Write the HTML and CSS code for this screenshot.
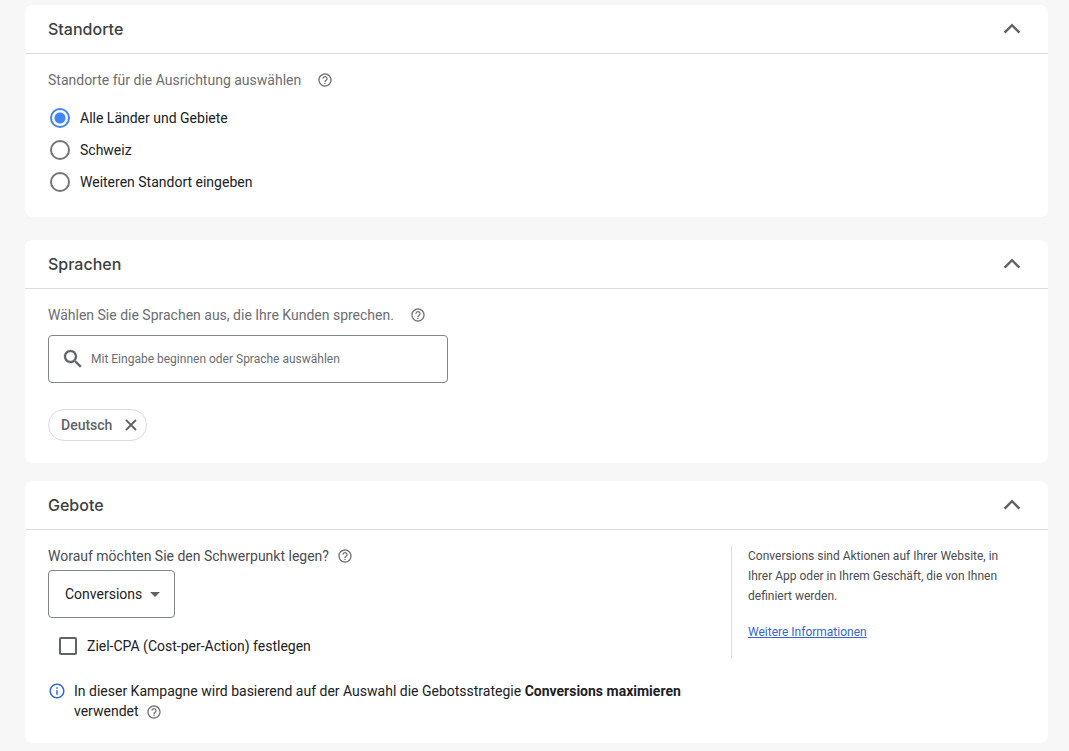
FILE: index.html
```html
<!DOCTYPE html>
<html lang="de">
<head>
  <meta charset="UTF-8">
  <meta name="viewport" content="width=device-width, initial-scale=1.0">
  <title>Kampagneneinstellungen</title>
  <link rel="stylesheet" href="styles.css">
</head>
<body>
  <!-- Shared icon shapes -->
  <svg class="sprite" aria-hidden="true">
    <symbol id="icon-help" viewBox="0 0 24 24">
      <path d="M11 18h2v-2h-2v2zm1-16C6.48 2 2 6.48 2 12s4.48 10 10 10 10-4.48 10-10S17.52 2 12 2zm0 18c-4.41 0-8-3.59-8-8s3.59-8 8-8 8 3.59 8 8-3.59 8-8 8zm0-14c-2.21 0-4 1.79-4 4h2c0-1.1.9-2 2-2s2 .9 2 2c0 2-3 1.75-3 5h2c0-2.25 3-2.5 3-5 0-2.21-1.79-4-4-4z"/>
    </symbol>
    <symbol id="icon-up" viewBox="0 0 24 24">
      <path d="M4.6 15.6L12 8.2l7.4 7.4" fill="none" stroke="currentColor" stroke-width="2.4"/>
    </symbol>
  </svg>

  <main class="settings">
    <section class="card">
      <div class="card-header">
        <h2>Standorte</h2>
        <button type="button" class="icon-button" aria-label="Standorte einklappen"><svg class="icon"><use href="#icon-up"/></svg></button>
      </div>
      <div class="card-body">
        <div class="field-title">
          <span id="locationTitle">Standorte für die Ausrichtung auswählen</span>
          <button type="button" class="icon-button help" aria-label="Hilfe"><svg class="icon-small"><use href="#icon-help"/></svg></button>
        </div>
        <div class="radio-group" role="radiogroup" aria-labelledby="locationTitle">
          <label class="radio"><input type="radio" name="location" value="all" checked>Alle Länder und Gebiete</label>
          <label class="radio"><input type="radio" name="location" value="ch">Schweiz</label>
          <label class="radio"><input type="radio" name="location" value="other">Weiteren Standort eingeben</label>
        </div>
      </div>
    </section>

    <section class="card card-languages">
      <div class="card-header">
        <h2>Sprachen</h2>
        <button type="button" class="icon-button" aria-label="Sprachen einklappen"><svg class="icon"><use href="#icon-up"/></svg></button>
      </div>
      <div class="card-body">
        <div class="field-title">
          <label for="language">Wählen Sie die Sprachen aus, die Ihre Kunden sprechen.</label>
          <button type="button" class="icon-button help" aria-label="Hilfe"><svg class="icon-small"><use href="#icon-help"/></svg></button>
        </div>
        <div class="search">
          <svg class="icon" viewBox="0 0 24 24"><path d="M15.5 14h-.79l-.28-.27C15.41 12.59 16 11.11 16 9.5 16 5.91 13.09 3 9.5 3S3 5.91 3 9.5 5.91 16 9.5 16c1.61 0 3.09-.59 4.23-1.57l.27.28v.79l5 4.99L20.49 19l-4.99-5zm-6 0C7.01 14 5 11.99 5 9.5S7.01 5 9.5 5 14 7.01 14 9.5 11.99 14 9.5 14z" stroke="currentColor" stroke-width=".3"/></svg>
          <input type="text" id="language" name="language" placeholder="Mit Eingabe beginnen oder Sprache auswählen">
        </div>
        <div class="chip">
          <span>Deutsch</span>
          <button type="button" class="icon-button" aria-label="Deutsch entfernen"><svg class="icon-small" viewBox="0 0 16 16"><path d="M3 3l10 10M13 3L3 13" stroke="currentColor" stroke-width="1.8"/></svg></button>
        </div>
      </div>
    </section>

    <section class="card">
      <div class="card-header">
        <h2>Gebote</h2>
        <button type="button" class="icon-button" aria-label="Gebote einklappen"><svg class="icon"><use href="#icon-up"/></svg></button>
      </div>
      <div class="card-body bids">
        <div class="bids-form">
          <div class="field-title dark">
            <label for="focus">Worauf möchten Sie den Schwerpunkt legen?</label>
            <button type="button" class="icon-button help" aria-label="Hilfe"><svg class="icon-small"><use href="#icon-help"/></svg></button>
          </div>
          <div class="select">
            <select id="focus" name="focus">
              <option>Conversions</option>
            </select>
            <svg class="select-arrow" viewBox="0 0 10 5"><path d="M0 0h10L5 5z"/></svg>
          </div>
          <label class="checkbox"><input type="checkbox" name="cpa">Ziel-CPA (Cost-per-Action) festlegen</label>
          <div class="info">
            <svg class="info-icon" viewBox="0 0 24 24"><path d="M11 7h2v2h-2zm0 4h2v6h-2zm1-9C6.48 2 2 6.48 2 12s4.48 10 10 10 10-4.48 10-10S17.52 2 12 2zm0 18c-4.41 0-8-3.59-8-8s3.59-8 8-8 8 3.59 8 8-3.59 8-8 8z"/></svg>
            <p>In dieser Kampagne wird basierend auf der Auswahl die Gebotsstrategie <strong>Conversions maximieren</strong> verwendet <button type="button" class="icon-button help" aria-label="Hilfe"><svg class="icon-small"><use href="#icon-help"/></svg></button></p>
          </div>
        </div>
        <aside class="hint">
          <p>Conversions sind Aktionen auf Ihrer Website, in Ihrer App oder in Ihrem Geschäft, die von Ihnen definiert werden.</p>
          <a href="#">Weitere Informationen</a>
        </aside>
      </div>
    </section>
  </main>
</body>
</html>
```
FILE: styles.css
```css
* {
  box-sizing: border-box;
}

body {
  margin: 0;
  background: #f7f7f7;
  color: #202124;
  font-family: Roboto, sans-serif;
  font-size: 14px;
  line-height: 20px;
}

p {
  margin: 0;
}

.sprite {
  display: none;
}

.settings {
  padding: 5px 21px 8px 25px;
}

.card {
  background: #fff;
  border-radius: 8px;
}

.card-languages {
  margin: 23px 0 18px;
}

.card-header {
  display: flex;
  align-items: center;
  justify-content: space-between;
  height: 49px;
  padding: 0 24px 0 23px;
  border-bottom: 1px solid #dadce0;
}

.card-header h2 {
  margin: 0;
  color: #3c4043;
  font-family: Inter, sans-serif;
  font-size: 16px;
  font-weight: 500;
}

.card-body {
  padding: 16px 23px 19px;
}

.card-languages .card-body,
.card-body.bids {
  padding-bottom: 22px;
}

.icon-button {
  display: inline-flex;
  padding: 0;
  border: none;
  background: none;
  color: #5f6368;
  cursor: pointer;
}

.icon-button.help {
  color: #757575;
}

.icon,
.icon-small {
  width: 24px;
  height: 24px;
  fill: currentColor;
}

.icon-small {
  width: 16px;
  height: 16px;
}

.field-title {
  display: flex;
  align-items: center;
  gap: 16px;
  color: #6b6e72;
}

.field-title.dark {
  gap: 8px;
  color: #4a4d51;
}

/* Radio buttons and checkbox */
.radio-group {
  margin-top: 12px;
}

.radio,
.checkbox {
  display: flex;
  align-items: center;
  gap: 10px;
  height: 32px;
}

.radio {
  padding-left: 2px;
}

.radio input,
.checkbox input {
  appearance: none;
  width: 20px;
  height: 20px;
  margin: 0;
  border: 2px solid #757575;
  border-radius: 50%;
}

.radio input:checked {
  border-color: #4285f4;
  background: radial-gradient(circle, #4285f4 5px, #fff 6px);
}

.checkbox {
  margin: 12px 0 19px 11px;
}

.checkbox input {
  width: 18px;
  height: 18px;
  border-color: #5f6368;
  border-radius: 2px;
}

/* Languages */
.search {
  display: flex;
  align-items: center;
  gap: 6px;
  max-width: 400px;
  height: 48px;
  margin-top: 10px;
  padding: 0 12px;
  border: 1px solid #80868b;
  border-radius: 4px;
  color: #5f6368;
}

.search input {
  flex: 1;
  padding: 0;
  border: none;
  outline: none;
  background: none;
  color: #202124;
  font: 12px/20px Roboto, sans-serif;
}

.search input::placeholder {
  color: #6b6e72;
  opacity: 1;
}

.chip {
  display: inline-flex;
  align-items: center;
  gap: 11px;
  height: 32px;
  margin-top: 26px;
  padding: 0 7px 0 12px;
  border: 1px solid #dadce0;
  border-radius: 16px;
  color: #5f6368;
  font-weight: 500;
  vertical-align: top;
}

/* Bids */
.bids {
  display: flex;
  align-items: flex-start;
  padding-right: 0;
}

.bids-form {
  flex: 1;
  padding-right: 24px;
}

.select {
  position: relative;
  width: 127px;
  margin-top: 4px;
}

.select select {
  appearance: none;
  width: 100%;
  height: 48px;
  padding: 0 16px;
  border: 1px solid #80868b;
  border-radius: 4px;
  background: #fff;
  color: #202124;
  font: inherit;
}

.select-arrow {
  position: absolute;
  top: 22px;
  right: 15px;
  width: 10px;
  height: 5px;
  fill: #5f6368;
  pointer-events: none;
}

.info {
  display: flex;
  gap: 8px;
}

.info-icon {
  flex: none;
  width: 18px;
  height: 20px;
  fill: #3367d6;
}

.info strong {
  font-weight: 700;
}

.info .icon-button {
  margin-left: 4px;
  vertical-align: middle;
}

.hint {
  width: 317px;
  min-height: 112px;
  padding: 0 32px 0 16px;
  border-left: 1px solid #dadce0;
  color: #4a4d51;
  font-size: 12px;
}

.hint a {
  display: inline-block;
  margin-top: 16px;
  color: #3367d6;
}
```
